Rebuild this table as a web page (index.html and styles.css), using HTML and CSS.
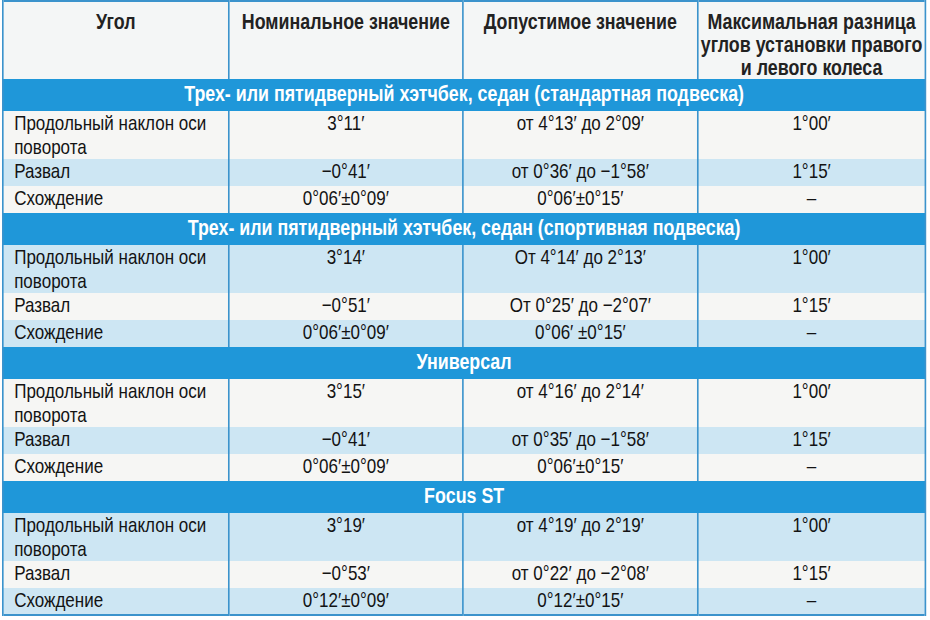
FILE: index.html
```html
<!DOCTYPE html>
<html lang="ru">
<head>
<meta charset="utf-8">
<link rel="stylesheet" href="styles.css">
</head>
<body>
<div class="frame">
<table class="spec">
  <colgroup>
    <col class="c1"><col class="c2"><col class="c3"><col class="c4">
  </colgroup>
  <thead>
    <tr class="head">
      <th>Угол</th>
      <th>Номинальное значение</th>
      <th>Допустимое значение</th>
      <th>Максимальная разница<br>углов установки правого<br>и левого колеса</th>
    </tr>
  </thead>
  <tbody>
    <tr class="sec"><td colspan="4">Трех- или пятидверный хэтчбек, седан (стандартная подвеска)</td></tr>
    <tr class="r2 w"><td>Продольный наклон оси<br>поворота</td><td>3°11′</td><td>от 4°13′ до 2°09′</td><td>1°00′</td></tr>
    <tr class="r1 b"><td>Развал</td><td>−0°41′</td><td>от 0°36′ до −1°58′</td><td>1°15′</td></tr>
    <tr class="r1 w"><td>Схождение</td><td>0°06′±0°09′</td><td>0°06′±0°15′</td><td>–</td></tr>

    <tr class="sec"><td colspan="4">Трех- или пятидверный хэтчбек, седан (спортивная подвеска)</td></tr>
    <tr class="r2 b"><td>Продольный наклон оси<br>поворота</td><td>3°14′</td><td>От 4°14′ до 2°13′</td><td>1°00′</td></tr>
    <tr class="r1 w"><td>Развал</td><td>−0°51′</td><td>От 0°25′ до −2°07′</td><td>1°15′</td></tr>
    <tr class="r1 b"><td>Схождение</td><td>0°06′±0°09′</td><td>0°06′ ±0°15′</td><td>–</td></tr>

    <tr class="sec"><td colspan="4">Универсал</td></tr>
    <tr class="r2 w"><td>Продольный наклон оси<br>поворота</td><td>3°15′</td><td>от 4°16′ до 2°14′</td><td>1°00′</td></tr>
    <tr class="r1 b"><td>Развал</td><td>−0°41′</td><td>от 0°35′ до −1°58′</td><td>1°15′</td></tr>
    <tr class="r1 w"><td>Схождение</td><td>0°06′±0°09′</td><td>0°06′±0°15′</td><td>–</td></tr>

    <tr class="sec"><td colspan="4">Focus ST</td></tr>
    <tr class="r2 b"><td>Продольный наклон оси<br>поворота</td><td>3°19′</td><td>от 4°19′ до 2°19′</td><td>1°00′</td></tr>
    <tr class="r1 w"><td>Развал</td><td>−0°53′</td><td>от 0°22′ до −2°08′</td><td>1°15′</td></tr>
    <tr class="r1 b"><td>Схождение</td><td>0°12′±0°09′</td><td>0°12′±0°15′</td><td>–</td></tr>
  </tbody>
</table>
</div>
</body>
</html>
```
FILE: styles.css
```css
html, body {
  margin: 0;
  padding: 0;
  background: #ffffff;
  overflow: hidden;
}
.frame {
  width: 930px;
  height: 620px;
  overflow: hidden;
  padding-left: 2px;
  box-sizing: border-box;
}
/* condensed type: the whole table is narrowed horizontally */
.spec {
  border-collapse: collapse;
  table-layout: fixed;
  width: 1139px;
  transform: scaleX(0.81);
  transform-origin: 0 0;
  font-family: "Liberation Sans", Arial, sans-serif;
  color: #131313;
  border: 2px solid #3b93cc;
}
.c1 { width: 279px; }
.c2 { width: 289px; }
.c3 { width: 290px; }
.c4 { width: 281px; }

.head th {
  height: 78px;
  vertical-align: top;
  background: #f4f6f6;
  border-left: 2px solid #3b93cc;
  border-right: 2px solid #3b93cc;
  font-size: 22px;
  font-weight: bold;
  line-height: 23px;
  padding: 8px 2px 0;
  white-space: nowrap;
  color: #222222;
  box-sizing: border-box;
}
.sec td {
  height: 32px;
  background: #1f97d9;
  color: #ffffff;
  font-weight: bold;
  font-size: 22px;
  text-align: center;
  line-height: 24px;
  padding: 3px 0 0;
  vertical-align: top;
  box-sizing: border-box;
}
.r2 td, .r1 td {
  font-size: 21px;
  line-height: 24px;
  text-align: center;
  vertical-align: top;
  padding: 0 6px;
  white-space: nowrap;
  border-left: 2px solid #3b93cc;
  border-right: 2px solid #3b93cc;
  box-sizing: border-box;
}
.r2 td { height: 48px; }
.r1 td { height: 27px; }
.r2 td:first-child, .r1 td:first-child {
  text-align: left;
  padding-left: 13px;
}
.w td { background: #f6f6f4; }
.b td { background: #cde6f3; }
```
